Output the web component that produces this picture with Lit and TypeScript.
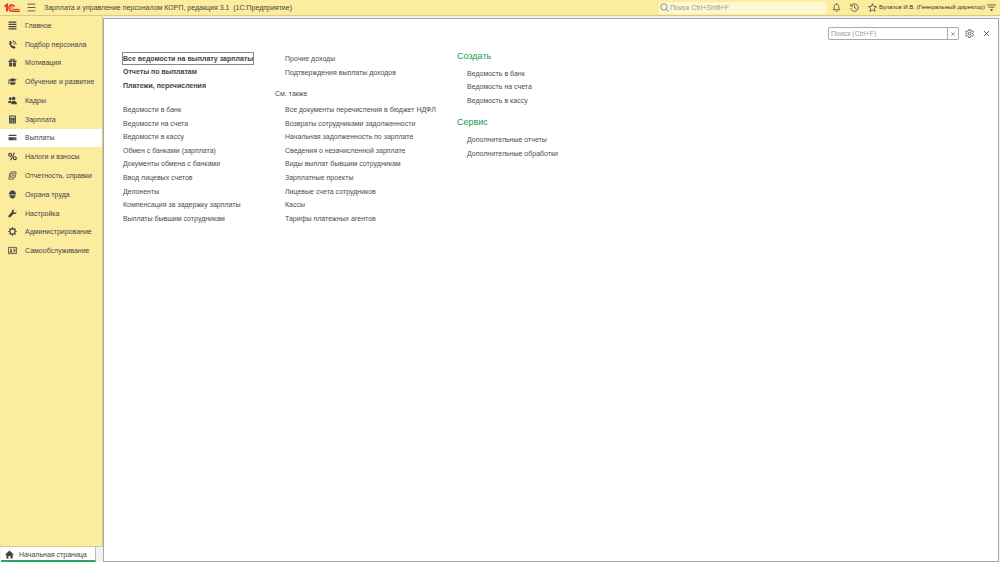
import { LitElement, html, css, svg, nothing } from "lit";
import { customElement, state } from "lit/decorators.js";
import { classMap } from "lit/directives/class-map.js";

const icons: Record<string, unknown> = {
  main: svg`<path d="M1 2h14M1 6h14M1 10h14M1 14h14" stroke="currentColor" stroke-width="2"/>`,
  phone: svg`<path d="M2.500 2.500 5 1.500l2 3.800-1.700 1.400c.5 2 1.700 3.600 3.200 4.600l1.900-1 3 2.700-1.500 2.300C6.500 15.500 1 9.500 2.500 2.500z" fill="currentColor"/><path d="M8 1.500c4 0 6.500 2.800 6.300 6.800M8 4.600c2.200 0 3.500 1.500 3.400 3.600" fill="none" stroke="currentColor" stroke-width="1.500"/>`,
  gift: svg`<path d="M1 4.500h6.200v3.300H1zM8.800 4.500H15v3.300H8.800zM2 8.800h5.200V15H2zM8.800 8.800H14V15H8.800z" fill="currentColor"/><path d="M8 4.500C6 4 4 3.500 4.500 2S7.500 2 8 4.500C8.500 2 11 .5 11.500 2S10 4 8 4.500" fill="none" stroke="currentColor" stroke-width="1.500"/>`,
  study: svg`<path d="M0 5.500 8.500 2 16 5l-7.500 3.500zM4 8l4.500 2L13 8v4.500c-3 2-6 2-9 0z" fill="currentColor"/><path d="M1.500 6v7" stroke="currentColor" stroke-width="1.500"/>`,
  people: svg`<circle cx="10" cy="4.500" r="3.200" fill="currentColor"/><circle cx="4" cy="4.800" r="2.500" fill="currentColor"/><path d="M0 12.500c0-3 1.500-4.500 5-4.500l1 4.500zM5.500 14.500c0-4 1.500-6 4.500-6s6 2 6 6z" fill="currentColor"/>`,
  calc: svg`<path fill-rule="evenodd" d="M2 1h12v14H2zm1.700 1.700v2.100h8.600V2.700zM4 6.500v1.200h2V6.500zm3 0v1.200h2V6.500zm3 0v1.200h2V6.500zM4 9.200v1.200h2V9.200zm3 0v1.200h2V9.200zm3 0v1.200h2V9.200zM4 12v1.200h2V12zm3 0v1.200h2V12zm3 0v1.200h2V12z" fill="currentColor"/>`,
  card: svg`<path d="M1 3h14v2.500H1zM1 7.500h14V13H1z" fill="currentColor"/><path d="M10 10.500h3" stroke="#fff" stroke-width="1"/>`,
  percent: svg`<circle cx="3.800" cy="5" r="2.600"/><circle cx="12.200" cy="11" r="2.600"/><path d="M11.500 1.500l-7 13"/>`,
  docs: svg`<path d="M6 1.500h8.500L13 11H4.500zM4.500 3.500H3.300L1.500 14.500H10l.5-2M7.500 4.500h4.800M7 7.500h4.800"/>`,
  helmet: svg`<path d="M1 8.200c.5-2 1.200-2.300 1.500-3.700C4 2 5.500 1 8 1s4 1 5.500 3.500c.3 1.400 1 1.700 1.500 3.700zM2.500 9.500h11C13.500 13 11 15 8 15s-5.500-2-5.500-5.500z" fill="currentColor"/>`,
  wrench: svg`<path d="M15 4.500 12.500 6.500 10 5.700 9.500 3.500 11.800 1C9 .2 6.500 2 6.700 5.200L.8 12c-1 1.800 1.200 4 3.200 2.800L9.800 9c3 .5 5.700-1.500 5.200-4.500z" fill="currentColor"/>`,
  cog: svg`<circle cx="8" cy="8" r="4.600" stroke-width="2"/><path d="M8 .5v3M8 12.500v3M.5 8h3M12.500 8h3M2.600 2.600l2 2M11.400 11.400l2 2M2.600 13.400l2-2M11.400 4.600l2-2" stroke-width="2.200"/>`,
  badge: svg`<path d="M.8 2.500h14.400v11H.8z"/><circle cx="5.300" cy="6.300" r="1.600" fill="currentColor" stroke="none"/><path d="M2.500 11.500c0-4 5.600-4 5.600 0z" fill="currentColor" stroke="none"/><path d="M9.500 5.500h4M9.500 8h4M9.500 10.500h4"/>`,
  home: svg`<path d="M8 1 0 8.500h2.300V15h4v-4.500h3.400V15h4V8.500H16z" fill="currentColor"/>`,
  burger: svg`<path d="M1 2h14M1 8h14M1 14h14" stroke-width="1.500"/>`,
  bell: svg`<path d="M2 12h12l-2-2.500V6c0-5-8-5-8 0v3.500zM8 .5v2M6.500 14c.5 1.300 2.500 1.300 3 0"/>`,
  history: svg`<path d="M2.300 4.800A6.600 6.600 0 1 1 1.400 9M1.500 1.500v4h4M8 4v4.500l3.500 1.500"/>`,
  star: svg`<path d="M8 1.200 10.100 6l5.100.5-3.900 3.400 1.200 5.100L8 12.300 3.500 15l1.200-5.100L.8 6.500 5.900 6z"/>`,
  menu: svg`<path d="M0 3.500h16M2.500 7.500h11"/><path d="M5 11h6l-3 3.500z" fill="currentColor" stroke="none"/>`,
  lens: svg`<circle cx="7" cy="7" r="5.700"/><path d="M11 11l4.500 4.500"/>`,
  gear: svg`<path d="M6.500 1h3l.5 2 1.500.8 2-.6L15 5.800 13.500 7.200v1.600L15 10.200l-1.500 2.600-2-.6-1.500.8-.5 2h-3L6 13l-1.500-.8-2 .6L1 10.200l1.500-1.400V7.200L1 5.800l1.500-2.600 2 .6L6 3z"/><circle cx="8" cy="8" r="2.600"/>`,
  close: svg`<path d="M3.500 3.500l9 9M12.500 3.500l-9 9"/>`,
};

const outlined = ["percent", "docs", "cog", "badge", "burger", "bell", "history", "star", "menu", "lens", "gear", "close"];

const icon = (name: string) => html`<svg
  class="icon"
  viewBox="0 0 16 16"
  fill="none"
  stroke=${outlined.includes(name) ? "currentColor" : nothing}
  stroke-width=${name === "percent" ? 2 : 1.4}
  aria-hidden="true"
>${icons[name]}</svg>`;

const sections: [string, string][] = [
  ["main", "Главное"],
  ["phone", "Подбор персонала"],
  ["gift", "Мотивация"],
  ["study", "Обучение и развитие"],
  ["people", "Кадры"],
  ["calc", "Зарплата"],
  ["card", "Выплаты"],
  ["percent", "Налоги и взносы"],
  ["docs", "Отчетность, справки"],
  ["helmet", "Охрана труда"],
  ["wrench", "Настройка"],
  ["cog", "Администрирование"],
  ["badge", "Самообслуживание"],
];

const important = ["Все ведомости на выплату зарплаты", "Отчеты по выплатам", "Платежи, перечисления"];
const payments = [
  "Ведомости в банк",
  "Ведомости на счета",
  "Ведомости в кассу",
  "Обмен с банками (зарплата)",
  "Документы обмена с банками",
  "Ввод лицевых счетов",
  "Депоненты",
  "Компенсация за задержку зарплаты",
  "Выплаты бывшим сотрудникам",
];
const income = ["Прочие доходы", "Подтверждения выплаты доходов"];
const related = [
  "Все документы перечисления в бюджет НДФЛ",
  "Возвраты сотрудниками задолженности",
  "Начальная задолженность по зарплате",
  "Сведения о незачисленной зарплате",
  "Виды выплат бывшим сотрудникам",
  "Зарплатные проекты",
  "Лицевые счета сотрудников",
  "Кассы",
  "Тарифы платежных агентов",
];
const create = ["Ведомость в банк", "Ведомость на счета", "Ведомость в кассу"];
const service = ["Дополнительные отчеты", "Дополнительные обработки"];

@customElement("app-root")
export class AppRoot extends LitElement {
  @state() private active = "Выплаты";
  @state() private query = "";

  static styles = css`
    :host {
      display: grid;
      grid-template-rows: 16px 1fr;
      height: 100vh;
      background: #f3f3f3;
      color: #444;
      font: 7px/13px "Liberation Sans", Arial, sans-serif;
    }
    * { box-sizing: border-box; }
    button, input { font: inherit; color: inherit; margin: 0; padding: 0; border: 0; background: none; }
    button { display: flex; align-items: center; justify-content: center; }
    input { min-width: 0; outline: 0; }
    input::placeholder { color: #999; opacity: 1; }
    a { color: inherit; text-decoration: none; }
    ul { list-style: none; margin: 0; padding: 0; }
    h1, h2, h3 { margin: 0; font: inherit; }
    .icon { display: block; width: 9px; height: 9px; flex: none; }
    .top {
      display: flex;
      align-items: center;
      padding: 0 4px;
      background: #fbec9e;
      border-bottom: 1px solid #d6c98a;
    }
    .logo { width: 16px; height: 10px; margin-right: 7px; }
    .title { flex: 1; margin-left: 8px; white-space: pre; }
    .global {
      display: flex;
      align-items: center;
      width: 167px;
      height: 12px;
      padding-left: 1px;
      background: #fef7d0;
      color: #777;
    }
    .global input { flex: 1; margin-left: 1px; }
    .tools { display: flex; gap: 9px; margin-left: 6px; }
    .user {
      width: 110px;
      font-size: 6px;
      text-align: center;
      white-space: nowrap;
      color: #333;
    }
    .body { display: grid; grid-template-columns: 103px 1fr; min-height: 0; }
    .side { display: flex; flex-direction: column; min-height: 0; }
    .nav {
      flex: 1;
      background: #fbec9e;
      border-right: 1px solid #d6c98a;
    }
    .sections { display: grid; grid-auto-rows: 1fr; height: 244px; }
    .section { display: flex; align-items: center; height: 100%; padding-left: 8px; gap: 8px; }
    .section.active { background: #fff; }
    .tabs { display: flex; height: 16px; border-top: 1px solid #d6c98a; }
    .tab {
      display: flex;
      align-items: center;
      gap: 5px;
      width: 95px;
      margin-left: 1px;
      padding: 2px 0 0 4px;
      background: #fff;
      border-right: 1px solid #bbb;
      border-bottom: 2px solid #27a565;
    }
    .panel {
      margin: 2px 1px 0 0;
      background: #fff;
      border: 1px solid #aaa;
      min-width: 0;
    }
    .bar { display: flex; justify-content: flex-end; align-items: center; padding: 8px 7px 0 0; }
    .find { display: flex; width: 131px; height: 13px; border: 1px solid #aaa; border-radius: 2px; }
    .find input { flex: 1; padding-left: 2px; }
    .clear { width: 11px; border-left: 1px solid #aaa; }
    .clear .icon { width: 6px; height: 6px; }
    .settings { margin: 0 8px 0 6px; }
    .menu {
      display: grid;
      grid-template-columns: 152px 182px 1fr;
      padding: 12px 0 0 19px;
      color: #4d4d4d;
    }
    .list { display: grid; grid-auto-rows: 1fr; align-items: center; white-space: nowrap; }
    .two { height: 27px; }
    .three { height: 40px; }
    .nine { height: 122px; }
    .important { font-weight: bold; margin-bottom: 11px; color: #444; }
    .important li { display: flex; }
    .important a { line-height: 11px; }
    .focused { outline: 1px solid #888; }
    .indent { padding-left: 10px; }
    .also { margin: 8px 0 3px; }
    .group { font-size: 9px; color: #0f9d4f; line-height: 9px; margin-bottom: 6px; }
    .group + .list { margin-bottom: 11px; }
  `;

  private links(items: string[], cls: string, focused = "") {
    return html`<ul class="list ${cls}">
      ${items.map((t) => html`<li><a href="#" class=${classMap({ focused: t === focused })}>${t}</a></li>`)}
    </ul>`;
  }

  render() {
    return html`
      <header class="top">
        <svg class="logo" viewBox="0 0 32 20" fill="none" stroke="#e0342b" aria-hidden="true">
          <path d="M1 7l5-3.500V17" stroke-width="3.800" />
          <path d="M21 7.500C19 2.500 10 2.500 10 10c0 4 3 6.500 6.500 6.500h15" stroke-width="2.800" />
          <path d="M18 9c-1-2.500-4.500-2-4.500 1 0 2 1.500 2.700 3.200 2.700h14.800" stroke-width="2" />
        </svg>
        <button aria-label="Меню">${icon("burger")}</button>
        <h1 class="title">Зарплата и управление персоналом КОРП, редакция 3.1  (1С:Предприятие)</h1>
        <label class="global">${icon("lens")}<input aria-label="Поиск" placeholder="Поиск Ctrl+Shift+F" /></label>
        <div class="tools">
          <button aria-label="Уведомления">${icon("bell")}</button>
          <button aria-label="История">${icon("history")}</button>
          <button aria-label="Избранное">${icon("star")}</button>
        </div>
        <a class="user" href="#">Булатов И.В. (Генеральный директор)</a>
        <button aria-label="Сервис и настройки">${icon("menu")}</button>
      </header>
      <div class="body">
        <aside class="side">
          <nav class="nav">
            <ul class="sections">
              ${sections.map(
                ([name, text]) => html`<li>
                  <a
                    href="#"
                    class=${classMap({ section: true, active: this.active === text })}
                    @click=${() => (this.active = text)}
                    >${icon(name)}<span>${text}</span></a
                  >
                </li>`
              )}
            </ul>
          </nav>
          <div class="tabs"><a class="tab" href="#">${icon("home")}<span>Начальная страница</span></a></div>
        </aside>
        <main class="panel">
          <div class="bar">
            <div class="find">
              <input
                aria-label="Поиск"
                placeholder="Поиск (Ctrl+F)"
                .value=${this.query}
                @input=${(e: Event) => (this.query = (e.target as HTMLInputElement).value)}
              />
              <button class="clear" aria-label="Очистить" @click=${() => (this.query = "")}>${icon("close")}</button>
            </div>
            <button class="settings" aria-label="Настройка">${icon("gear")}</button>
            <button aria-label="Закрыть">${icon("close")}</button>
          </div>
          <div class="menu">
            <section>
              ${this.links(important, "important three", important[0])} ${this.links(payments, "nine")}
            </section>
            <section>
              ${this.links(income, "indent two")}
              <h3 class="also">См. также</h3>
              ${this.links(related, "indent nine")}
            </section>
            <section>
              <h2 class="group">Создать</h2>
              ${this.links(create, "indent three")}
              <h2 class="group">Сервис</h2>
              ${this.links(service, "indent two")}
            </section>
          </div>
        </main>
      </div>
    `;
  }
}
